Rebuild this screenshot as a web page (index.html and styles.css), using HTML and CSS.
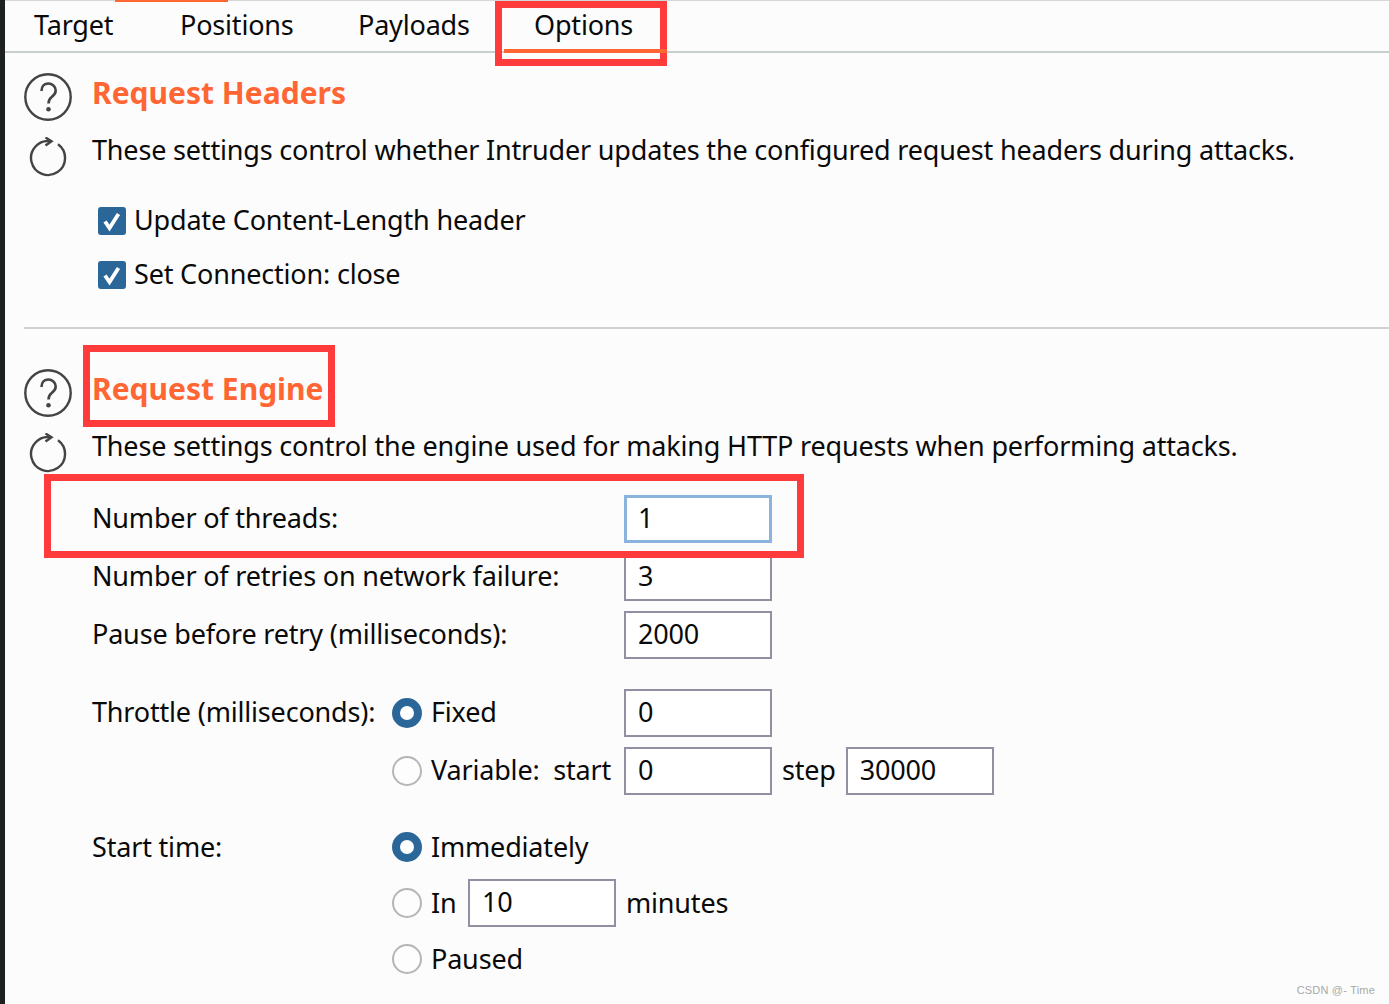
FILE: index.html
```html
<!DOCTYPE html>
<html lang="en">

<head>
  <meta charset="UTF-8">
  <title>Intruder Options</title>
  <link rel="stylesheet" href="styles.css">
</head>
<body>

<div class="page">
  <div class="edge"></div>

  <div class="main">
    <div class="tabs">
      <span class="tab">Target</span>
      <span class="tab">Positions</span>
      <span class="tab">Payloads</span>
      <span class="tab active">Options</span>
    </div>

    <div class="content">
      <div class="section">
        <div class="head">
          <svg class="icon" width="48" height="48" viewBox="0 0 48 48"><use href="#help"/></svg>
          <h2>Request Headers</h2>
          <svg class="icon spin" width="48" height="40" viewBox="0 0 48 40"><use href="#reload"/></svg>
          <p>These settings control whether Intruder updates the configured request headers during attacks.</p>
        </div>
        <div class="checks">
          <label class="check"><span class="box"><svg width="28" height="28" viewBox="0 0 28 28"><use href="#tick"/></svg></span>Update Content-Length header</label>
          <label class="check"><span class="box"><svg width="28" height="28" viewBox="0 0 28 28"><use href="#tick"/></svg></span>Set Connection: close</label>
        </div>
      </div>

      <hr class="divider">

      <div class="section">
        <div class="head">
          <svg class="icon" width="48" height="48" viewBox="0 0 48 48"><use href="#help"/></svg>
          <h2>Request Engine</h2>
          <svg class="icon spin" width="48" height="40" viewBox="0 0 48 40"><use href="#reload"/></svg>
          <p>These settings control the engine used for making HTTP requests when performing attacks.</p>
        </div>

        <div class="form">
          <div class="group">
            <div class="row"><span class="label wide text">Number of threads:</span><input class="field focus" value="1"></div>
            <div class="row"><span class="label wide text">Number of retries on network failure:</span><input class="field" value="3"></div>
            <div class="row"><span class="label wide text">Pause before retry (milliseconds):</span><input class="field" value="2000"></div>
          </div>

          <div class="group">
            <div class="row">
              <span class="label text">Throttle (milliseconds):</span>
              <span class="option"><span class="radio on"></span><span class="text">Fixed</span></span>
              <input class="field" value="0">
            </div>
            <div class="row">
              <span class="label"></span>
              <span class="option"><span class="radio"></span><span class="text">Variable:&nbsp; start</span></span>
              <input class="field" value="0">
              <span class="after text">step</span>
              <input class="field" value="30000">
            </div>
          </div>

          <div class="group tight">
            <div class="row">
              <span class="label text">Start time:</span>
              <span class="option"><span class="radio on"></span><span class="text">Immediately</span></span>
            </div>
            <div class="row">
              <span class="label"></span>
              <span class="radio"></span><span class="in text">In</span>
              <input class="field" value="10">
              <span class="after text">minutes</span>
            </div>
            <div class="row">
              <span class="label"></span>
              <span class="option"><span class="radio"></span><span class="text">Paused</span></span>
            </div>
          </div>
        </div>
      </div>
    </div>

    <!-- red annotation boxes drawn over the screenshot -->
    <div class="mark mark-options"></div>
    <div class="mark mark-engine"></div>
    <div class="mark mark-threads"></div>
    <div class="underline"></div>
    <div class="watermark">CSDN @- Time</div>
  </div>
</div>

<svg class="defs" width="0" height="0">
  <symbol id="help" viewBox="0 0 48 48">
    <circle cx="24" cy="24" r="22.7" fill="none" stroke="#444" stroke-width="2.4"/>
    <path d="M17.500 18c0-5 3-7.500 6.800-7.500s7.400 3 7.400 7c0 3.500-2 5-4 6.500-2 1.500-3.200 3-3.200 6.500" fill="none" stroke="#444" stroke-width="2.600"/>
    <circle cx="24.500" cy="36.200" r="2.300" fill="#444"/>
  </symbol>
  <symbol id="reload" viewBox="0 0 48 40">
    <path d="M34 7.200A17 17 0 1 1 26 4.100" fill="none" stroke="#444" stroke-width="2.400"/>
    <path d="M21.500 0.500l6 3.700-6 4.300" fill="none" stroke="#444" stroke-width="2.400"/>
  </symbol>
  <symbol id="tick" viewBox="0 0 28 28">
    <path d="M7 14.500l4.500 6.500 9-14" fill="none" stroke="#fff" stroke-width="3.800"/>
  </symbol>
</svg>

</body>
</html>
```

FILE: styles.css
```css
* {
  box-sizing: border-box;
}

html, body {
  margin: 0;
  height: 100%;
}

body {
  font-family: "Noto Sans", "Open Sans", Arial, sans-serif;
  font-size: 27px;
  letter-spacing: -0.18px;
  color: #0a0a0a;
  background-color: #fcfcfc;
  overflow: hidden;
}

.page {
  display: flex;
  height: 1004px;
}

.edge {
  width: 5px;
  flex: none;
  background-color: #1d2120;
}

.main {
  flex: 1;
  position: relative;
  overflow: hidden;
}

.defs {
  position: absolute;
}

/* tabs */
.tabs {
  display: grid;
  grid-template-columns: 146px 178px 176px auto;
  height: 53px;
  padding-left: 29px;
  border-top: 1px solid #d4d8d6;
  border-bottom: 2px solid #c9cfcd;
  line-height: 48px;
}

.tabs::before {
  content: "";
  position: absolute;
  left: 110px;
  top: 0;
  width: 113px;
  height: 2px;
  background-color: #ff6633;
}

/* sections */
.content {
  padding: 20px 0 0 19px;
}

.head {
  display: grid;
  grid-template-columns: 48px 1fr;
  grid-template-rows: 48px 48px;
  column-gap: 20px;
  row-gap: 8px;
}

.head h2 {
  margin: 0;
  font-size: 30px;
  letter-spacing: 0;
  line-height: 40px;
  font-weight: 700;
  color: #ff6633;
}

.head p {
  margin: 0;
  line-height: 42px;
  white-space: nowrap;
}

.spin {
  margin-top: 8px;
}

.checks {
  display: flex;
  flex-direction: column;
  gap: 26px;
  margin: 30px 0 0 74px;
}

.check {
  display: flex;
  align-items: flex-start;
  gap: 8px;
  height: 28px;
  line-height: 26px;
}

.box {
  width: 28px;
  height: 28px;
  border-radius: 3px;
  background-color: #2b6699;
}

.box svg {
  display: block;
}

.divider {
  height: 2px;
  margin: 38px 0 40px;
  border: none;
  background-color: #d2d2d2;
}

/* form */
.form {
  display: flex;
  flex-direction: column;
  gap: 30px;
  margin: 22px 0 0 68px;
}

.group {
  display: flex;
  flex-direction: column;
  gap: 10px;
}

.group.tight {
  gap: 8px;
  margin-top: -2px;
}

.row {
  display: flex;
  align-items: center;
  height: 48px;
}

.text {
  padding-bottom: 4px;
}

.tight .text {
  padding-bottom: 2px;
}

.label {
  width: 300px;
  flex: none;
  white-space: nowrap;
}

.label.wide {
  width: 532px;
}

.option {
  display: flex;
  align-items: center;
  gap: 9px;
  width: 232px;
  flex: none;
  white-space: nowrap;
}

.radio {
  width: 30px;
  height: 30px;
  flex: none;
  border: 2px solid #b5b5b5;
  border-radius: 50%;
  background-color: #fdfdfd;
}

.radio.on {
  border: 8px solid #2b6699;
  background-color: #fff;
}

.in {
  width: 46px;
  padding-left: 9px;
  flex: none;
}

.field {
  width: 148px;
  height: 48px;
  flex: none;
  padding: 0 0 4px 12px;
  border: 2px solid #9190a3;
  border-radius: 0;
  background-color: #fff;
  font: inherit;
  letter-spacing: inherit;
  color: inherit;
  outline: none;
}

.field.focus {
  border: 3px solid #8ab4de;
  padding-left: 11px;
}

.after {
  padding-left: 10px;
  padding-right: 10px;
}

/* overlays */
.mark {
  position: absolute;
  border: 7px solid #ff3b3b;
}

.mark-options {
  left: 490px;
  top: 1px;
  width: 172px;
  height: 65px;
}

.mark-engine {
  left: 78px;
  top: 345px;
  width: 252px;
  height: 82px;
}

.mark-threads {
  left: 39px;
  top: 474px;
  width: 760px;
  height: 84px;
}

.underline {
  position: absolute;
  left: 499px;
  top: 49px;
  width: 163px;
  height: 4px;
  background-color: #ff6633;
}

.watermark {
  position: absolute;
  right: 14px;
  bottom: 8px;
  font-family: "Liberation Sans", Arial, sans-serif;
  font-size: 11px;
  letter-spacing: 0.2px;
  color: #a8a8a8;
}
```
